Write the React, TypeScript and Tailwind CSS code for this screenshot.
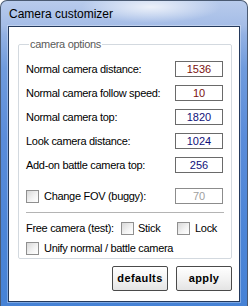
const rows = [
  { label: 'Normal camera distance:', value: '1536', tone: 'text-[#7a1010]' },
  { label: 'Normal camera follow speed:', value: '10', tone: 'text-[#7a1010]' },
  { label: 'Normal camera top:', value: '1820', tone: 'text-[#10107a]' },
  { label: 'Look camera distance:', value: '1024', tone: 'text-[#10107a]' },
  { label: 'Add-on battle camera top:', value: '256', tone: 'text-[#10107a]' },
];

export default function App() {
  return (
    <div className="w-[248px] h-[306px] bg-white">
      <div className="w-[248px] h-[306px] flex flex-col pl-[7px] pr-[7px] pb-[4px] rounded-t-[7px] border border-b-0 border-[#4a5a72] bg-[radial-gradient(ellipse_70px_16px_at_150px_6px,rgba(255,255,255,0.75),rgba(255,255,255,0)),linear-gradient(180deg,#b8cbec_0%,#a5bde7_8%,#93b1e3_11%,#6f9bdd_22%,#5a8cda_45%,#4c85d7_75%,#4682d6_100%)] font-['Liberation_Sans',Arial,sans-serif] text-black">

        {/* Title bar */}
        <div className="h-[25px] shrink-0 flex items-center pl-[1px]">
          <span className="text-[12px] leading-none text-black">Camera customizer</span>
        </div>

        {/* Client area */}
        <div className="flex-1 flex flex-col bg-white border border-[#24395c] shadow-[0_0_0_1px_rgba(255,255,255,0.3)]">
          <fieldset className="mt-[11px] ml-[9px] mr-[7px] px-[7px] pt-[10px] pb-[3px] border border-[#d3d9df] rounded-[2px]">
            <legend className="ml-[3px] px-[1px] text-[11px] leading-[13px] tracking-[-0.3px] text-[#5a5a5a]">
              camera options
            </legend>

            <div className="flex flex-col gap-2 pr-[1px]">
              {rows.map((r) => (
                <div key={r.label} className="flex items-center justify-between h-[16px]">
                  <span className="text-[11px] tracking-[-0.3px]">{r.label}</span>
                  <ValueBox value={r.value} tone={r.tone} />
                </div>
              ))}
            </div>

            <div className="flex items-center justify-between h-[16px] mt-[15px] pr-[1px]">
              <label className="flex items-center gap-[5px] text-[11px] tracking-[-0.3px]">
                <Box />
                Change FOV (buggy):
              </label>
              <ValueBox value="70" tone="text-[#a0a0a0]" disabled />
            </div>

            <div className="mt-[8px] h-px bg-[#b4b4b4]" />

            <div className="mt-[9px] h-[13px] flex items-center text-[11px] tracking-[-0.3px]">
              <span className="w-[95px]">Free camera (test):</span>
              <label className="w-[56px] flex items-center gap-[4px]">
                <Box />
                Stick
              </label>
              <label className="flex items-center gap-[5px]">
                <Box />
                Lock
              </label>
            </div>

            <label className="mt-[7px] h-[13px] flex items-center gap-[5px] text-[11px] tracking-[-0.3px]">
              <Box />
              Unify normal / battle camera
            </label>
          </fieldset>

          <div className="mt-[7px] mr-[7px] flex justify-end gap-2">
            <Button>defaults</Button>
            <Button>apply</Button>
          </div>
        </div>
      </div>
    </div>
  );
}

function ValueBox({ value, tone, disabled }: { value: string; tone: string; disabled?: boolean }) {
  return (
    <div
      className={`w-[48px] h-[16px] flex items-center justify-center border text-[11px] leading-none ${
        disabled ? 'border-[#8c8c8c]' : 'border-[#6a6a6a]'
      } ${tone}`}
    >
      {value}
    </div>
  );
}

function Box() {
  return (
    <span className="block w-[13px] h-[13px] shrink-0 border border-[#8f8f8f] bg-[linear-gradient(135deg,#d8d8d8_0%,#f4f4f4_60%,#ffffff_100%)]" />
  );
}

function Button({ children }: { children: string }) {
  return (
    <button className="w-[56px] h-[25px] flex items-center justify-center border border-[#4a4a4a] rounded-[2px] bg-[linear-gradient(180deg,#ffffff_0%,#f3f3f3_50%,#e4e4e4_100%)] text-[11px] font-bold tracking-[0.4px] text-black">
      {children}
    </button>
  );
}
